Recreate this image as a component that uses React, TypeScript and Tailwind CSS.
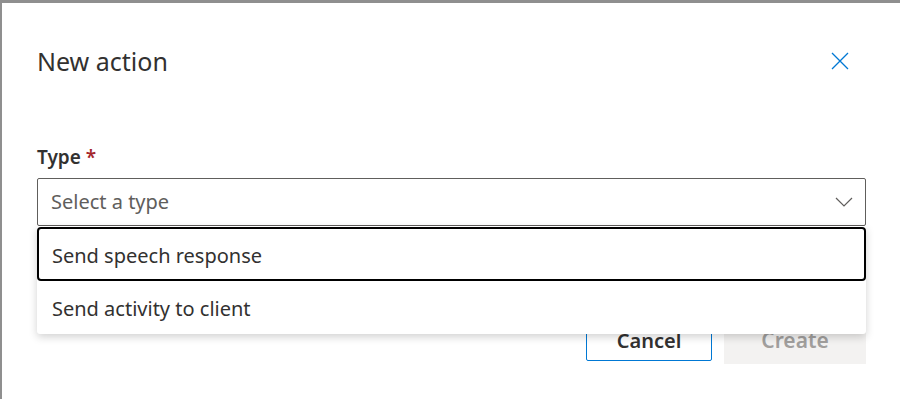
import React from "react";

export default function App() {
  const font = { fontFamily: '"Noto Sans", "Open Sans", sans-serif' };
  return (
    <div
      className="w-[900px] h-[399px] bg-[#8f8f8f] pt-[3px] pl-[2px] overflow-hidden"
      style={font}
    >
      <div className="relative h-[396px] w-[898px] bg-white">
        <div className="flex items-center justify-between pl-[35px] pr-[51px] pt-[42px]">
          <h1 className="text-[25px] leading-[32px] font-normal text-[#323130]">New action</h1>
          <button className="w-[18px] h-[18px] flex items-center justify-center text-[#0078d4]">
            <svg width="18" height="18" viewBox="0 0 18 18" fill="none" stroke="currentColor" strokeWidth="1.3">
              <path d="M1 1 L17 17 M17 1 L1 17" />
            </svg>
          </button>
        </div>
        <div className="pl-[35px] pr-[34px] pt-[68px]">
          <div className="text-[19px] leading-[24px] font-semibold text-[#323130]">
            Type <span className="text-[#a4262c]">*</span>
          </div>
          <div className="mt-[9px] h-[48px] border border-[#605e5c] rounded-[2px] flex items-center justify-between pl-[13px] pr-[12px]">
            <span className="text-[20px] text-[#605e5c]">Select a type</span>
            <svg width="18" height="10" viewBox="0 0 18 10" fill="none" stroke="#605e5c" strokeWidth="1.2">
              <path d="M1 1 L9 9 L17 1" />
            </svg>
          </div>
          <div className="flex justify-end items-center gap-[12px] mt-[91px]">
            <button className="w-[126px] h-[41px] border border-[#0078d4] rounded-[2px] text-[20px] font-semibold text-[#323130] flex items-center justify-center">
              Cancel
            </button>
            <button className="w-[142px] h-[47px] bg-[#f3f2f1] text-[21px] font-semibold text-[#a19f9d] flex items-center justify-center">
              Create
            </button>
          </div>
        </div>
        <div className="absolute left-[35px] top-[223px] w-[829px] bg-white rounded-[3px] shadow-[0_3px_8px_rgba(0,0,0,0.18)] py-[1px]">
          <div className="h-[54px] border-2 border-black rounded-[4px] flex items-center pl-[13px] pt-[3px] text-[20px] text-[#323130]">
            Send speech response
          </div>
          <div className="h-[52px] flex items-center pl-[15px] pt-[3px] text-[20px] text-[#323130]">
            Send activity to client
          </div>
        </div>
      </div>
    </div>
  );
}
